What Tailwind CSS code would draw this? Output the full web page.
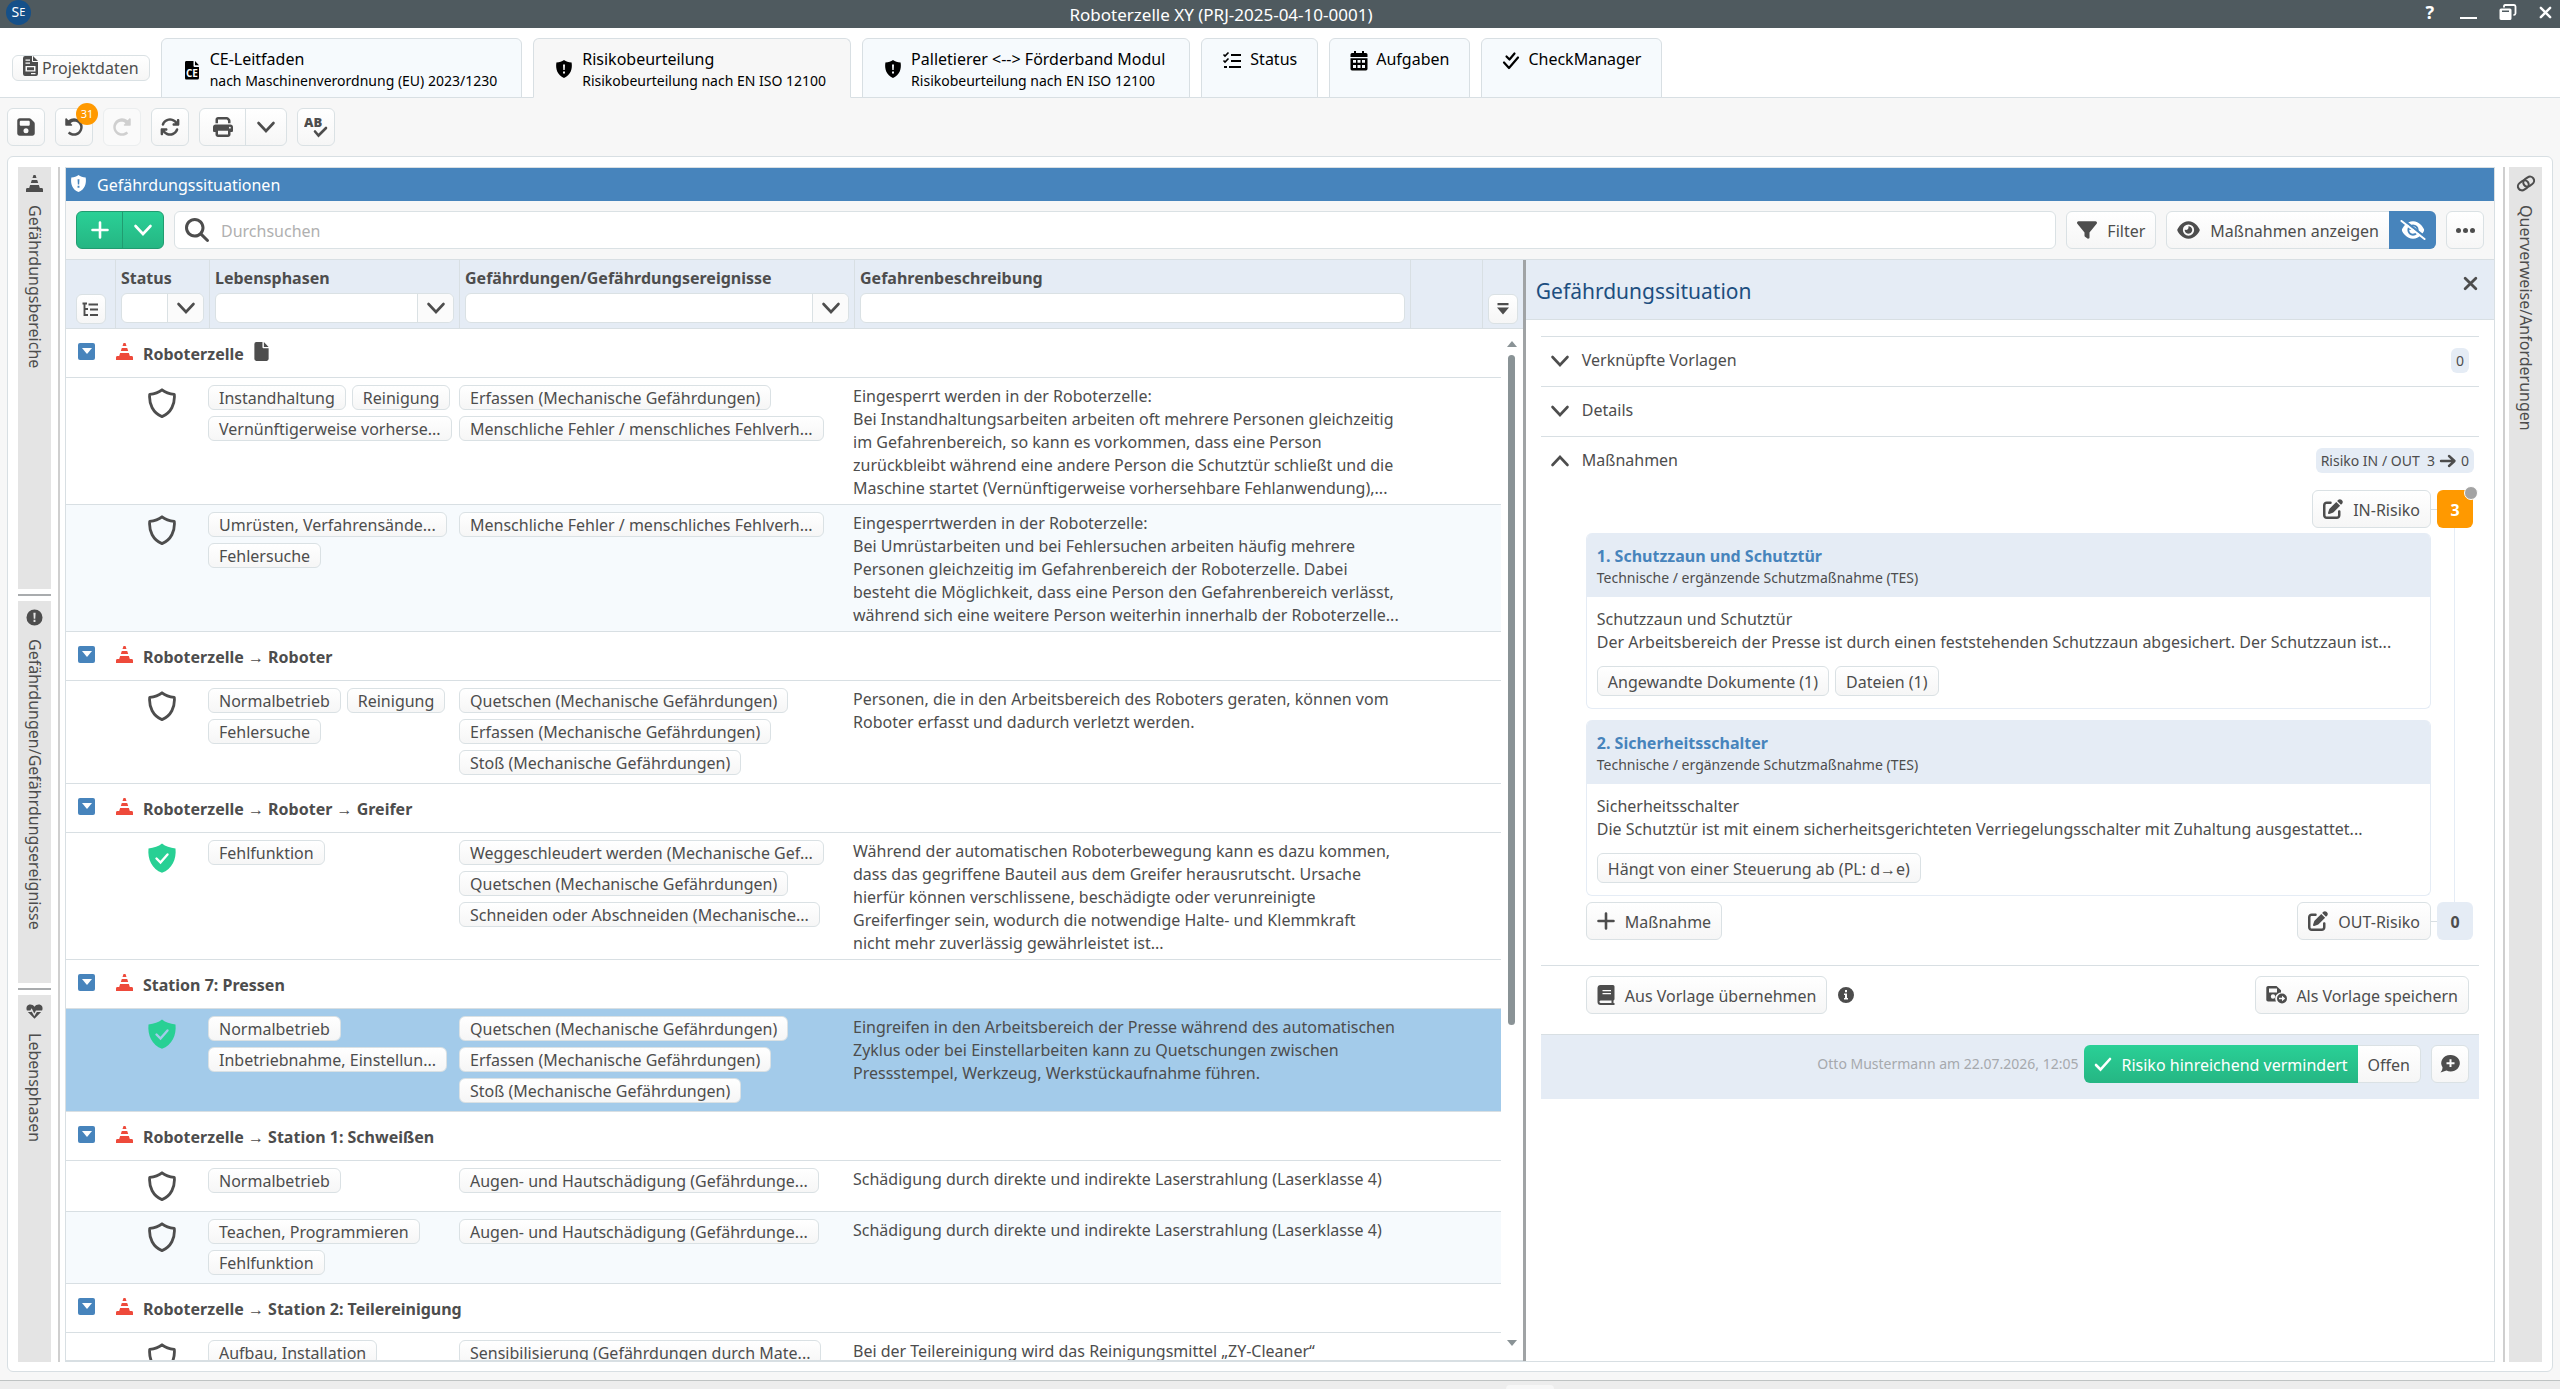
<!DOCTYPE html>
<html lang="de">
<head>
    <meta charset="UTF-8">
    <meta name="viewport" content="width=device-width, initial-scale=1.0">
    <title>Roboterzelle XY (PRJ-2025-04-10-0001)</title>
    <script src="https://cdn.jsdelivr.net/npm/@tailwindcss/browser@4"></script>
</head>
<body class="h-screen flex flex-col overflow-hidden bg-[#f7f7f7] font-['Noto_Sans','Open_Sans',sans-serif] text-base leading-[23px] text-[#4d4d4d]">

    <!-- Icons -->
    <svg class="hidden">
        <symbol id="i-save" viewBox="0 0 448 512"><path fill="currentColor" d="M64 32C28.7 32 0 60.7 0 96V416c0 35.3 28.7 64 64 64H384c35.3 0 64-28.7 64-64V173.3c0-17-6.7-33.3-18.7-45.3L352 50.7C340 38.7 323.7 32 306.7 32H64zm0 96c0-17.7 14.3-32 32-32H288c17.7 0 32 14.3 32 32v64c0 17.7-14.3 32-32 32H96c-17.7 0-32-14.3-32-32V128zM224 288a64 64 0 1 1 0 128 64 64 0 1 1 0-128z"/></symbol>
        <symbol id="i-undo" viewBox="0 0 512 512"><path fill="currentColor" d="M48 32L32 48v160l16 16h150l16-20-44-44c60-50 140-44 199 0 62 62 62 150 0 212s-164 62-226 0l-46 42c88 88 230 88 317 0s87-229 0-317-210-88-304-16L64 32z"/></symbol>
        <symbol id="i-rotate" viewBox="0 0 512 512"><path fill="currentColor" d="M105.1 202.6c7.7-21.8 20.2-42.3 37.8-59.8c62.5-62.5 163.8-62.5 226.3 0L386.3 160H352c-17.7 0-32 14.3-32 32s14.3 32 32 32H463.9c17.7 0 32-14.3 32-32V80c0-17.7-14.3-32-32-32s-32 14.3-32 32v35.2L414.4 97.6c-87.5-87.5-229.3-87.5-316.8 0C73.2 122 55.6 150.7 44.8 181.4c-5.9 16.7 2.9 34.9 19.5 40.8s34.9-2.9 40.8-19.5zM39 289.3c-5 1.5-9.8 4.2-13.7 8.2c-4 4-6.7 8.8-8.1 14c-.3 1.2-.6 2.5-.8 3.8c-.3 1.7-.4 3.4-.4 5.1V432c0 17.7 14.3 32 32 32s32-14.3 32-32V396.9l17.6 17.5c87.5 87.4 229.3 87.4 316.7 0c24.4-24.4 42.1-53.1 52.9-83.7c5.9-16.7-2.9-34.9-19.5-40.8s-34.9 2.9-40.8 19.5c-7.7 21.8-20.2 42.3-37.8 59.8c-62.5 62.5-163.8 62.5-226.3 0l-.1-.1L125.6 352H160c17.7 0 32-14.3 32-32s-14.3-32-32-32H48.4c-1.6 0-3.2 .1-4.8 .3s-3.1 .5-4.6 1z"/></symbol>
        <symbol id="i-print" viewBox="0 0 512 512"><path fill="currentColor" d="M128 0C92.7 0 64 28.7 64 64v96h64V64H354.7L384 93.3V160h64V93.3c0-17-6.7-33.3-18.7-45.3L400 18.7C388 6.7 371.7 0 354.7 0H128zM384 352v96H128V352H384zm64 32h32c17.7 0 32-14.3 32-32V256c0-35.3-28.7-64-64-64H64c-35.3 0-64 28.7-64 64v96c0 17.7 14.3 32 32 32H64v64c0 35.3 28.7 64 64 64H384c35.3 0 64-28.7 64-64V384zM432 248a24 24 0 1 1 0 48 24 24 0 1 1 0-48z"/></symbol>
        <symbol id="i-search" viewBox="0 0 512 512"><path fill="currentColor" d="M416 208c0 45.9-14.9 88.3-40 122.7L502.6 457.4c12.5 12.5 12.5 32.8 0 45.3s-32.8 12.5-45.3 0L330.7 376c-34.4 25.2-76.8 40-122.7 40C93.1 416 0 322.9 0 208S93.1 0 208 0S416 93.1 416 208zM208 352a144 144 0 1 0 0-288 144 144 0 1 0 0 288z"/></symbol>
        <symbol id="i-filter" viewBox="0 0 512 512"><path fill="currentColor" d="M3.9 54.9C10.5 40.9 24.5 32 40 32H472c15.5 0 29.5 8.9 36.1 22.9s4.6 30.5-5.2 42.5L320 320.9V448c0 12.1-6.8 23.2-17.7 28.6s-23.8 4.3-33.5-3l-64-48c-8.1-6-12.8-15.5-12.8-25.6V320.9L9 97.3C-.7 85.4-2.8 68.8 3.9 54.9z"/></symbol>
        <symbol id="i-eye" viewBox="0 0 576 512"><path fill="currentColor" d="M288 32c-80.8 0-145.5 36.8-192.6 80.6C48.6 156 17.3 208 2.5 243.7c-3.3 7.9-3.3 16.7 0 24.6C17.3 304 48.6 356 95.4 399.4C142.5 443.2 207.2 480 288 480s145.5-36.8 192.6-80.6c46.8-43.5 78.1-95.4 93-131.1c3.3-7.9 3.3-16.7 0-24.6c-14.9-35.7-46.2-87.7-93-131.1C433.5 68.8 368.8 32 288 32zM144 256a144 144 0 1 1 288 0 144 144 0 1 1 -288 0zm144-64c0 35.3-28.7 64-64 64c-7.1 0-13.9-1.2-20.3-3.3c-5.5-1.8-11.9 1.6-11.7 7.4c.3 6.9 1.3 13.8 3.2 20.7c13.7 51.2 66.4 81.6 117.6 67.9s81.6-66.4 67.9-117.6c-11.1-41.5-47.8-69.4-88.6-71.1c-5.8-.2-9.2 6.1-7.4 11.7c2.1 6.4 3.3 13.2 3.3 20.3z"/></symbol>
        <symbol id="i-eye-off" viewBox="0 0 640 512"><use href="#i-eye" x="32" y="0" width="576" height="512"/><path stroke="#4784bc" stroke-width="60" d="M50 -20L640 445"/><path stroke="currentColor" stroke-width="50" stroke-linecap="round" d="M25 25L615 487"/></symbol>
        <symbol id="i-edit" viewBox="0 0 512 512"><path fill="currentColor" d="M471.6 21.7c-21.9-21.9-57.3-21.9-79.2 0L362.3 51.7l97.9 97.9 30.1-30.1c21.9-21.9 21.9-57.3 0-79.2L471.6 21.7zm-299.2 220c-6.1 6.1-10.8 13.6-13.5 21.9l-29.6 88.8c-2.9 8.6-.6 18.1 5.8 24.6s15.9 8.7 24.6 5.8l88.8-29.6c8.2-2.7 15.7-7.4 21.9-13.5L437.7 172.3 339.7 74.3 172.4 241.7zM96 64C43 64 0 107 0 160V416c0 53 43 96 96 96H352c53 0 96-43 96-96V320c0-17.7-14.3-32-32-32s-32 14.3-32 32v96c0 17.7-14.3 32-32 32H96c-17.7 0-32-14.3-32-32V160c0-17.7 14.3-32 32-32h96c17.7 0 32-14.3 32-32s-14.3-32-32-32H96z"/></symbol>
        <symbol id="i-down" viewBox="0 0 20 20"><path fill="none" stroke="currentColor" stroke-width="2.6" stroke-linecap="round" d="M2.5 6L10 14L17.500 6"/></symbol>
        <symbol id="i-up" viewBox="0 0 20 20"><path fill="none" stroke="currentColor" stroke-width="2.6" stroke-linecap="round" d="M2.5 14L10 6L17.500 14"/></symbol>
        <symbol id="i-plus" viewBox="0 0 18 18"><path fill="none" stroke="currentColor" stroke-width="2.6" stroke-linecap="round" d="M9 1.500V16.500M1.500 9H16.500"/></symbol>
        <symbol id="i-close" viewBox="0 0 14 14"><path fill="none" stroke="currentColor" stroke-width="2.6" stroke-linecap="round" d="M2 2L12 12M12 2L2 12"/></symbol>
        <symbol id="i-check" viewBox="0 0 18 18"><path fill="none" stroke="currentColor" stroke-width="2.6" stroke-linecap="round" d="M2 10L6.500 14.500L16 4"/></symbol>
        <symbol id="i-shield" viewBox="0 0 30 30"><path fill="none" stroke="currentColor" stroke-width="2.8" stroke-linejoin="round" d="M15 1.800C18.500 4.500 22.500 5.800 27.300 6.400C28.200 16 24 25 15 28.600C6 25 1.800 16 2.700 6.400C7.500 5.800 11.500 4.500 15 1.800Z"/></symbol>
        <symbol id="i-shield-ok" viewBox="0 0 30 30"><path fill="currentColor" d="M15 0.500C18.500 3.300 23 5 28.500 5.400C29.600 16 25 26 15 29.800C5 26 .4 16 1.500 5.400C7 5 11.500 3.300 15 .5Z"/></symbol>
        <symbol id="i-shield-alert" viewBox="0 0 18 18"><path fill="currentColor" fill-rule="evenodd" d="M9 0C11 1.500 13.500 2.400 16.600 2.600C17.700 9 15.500 15.500 9 18C2.500 15.500 .3 9 1.400 2.600C4.500 2.400 7 1.500 9 0ZM8 4.500L8.300 10H9.700L10 4.500ZM8 11.500H10V13.500H8Z"/></symbol>
        <symbol id="i-cone" viewBox="0 0 17 17"><path fill="currentColor" d="M7.500 0H9.500L10.500 3H6.500ZM5.800 5H11.200L12.200 8H4.800ZM4.100 10H12.900L13.800 13H16Q17 13.200 17 14.500V17H0V14.500Q0 13.200 1 13H3.200Z"/></symbol>
        <symbol id="i-file" viewBox="0 0 15 20"><path fill="currentColor" d="M2 0H8.500V5.500Q8.700 6.500 9.500 6.500H15V18Q14.800 19.800 13 20H2Q.2 19.800 0 18V2Q.2 .2 2 0ZM10 0L15 5.300H10Z"/></symbol>
        <symbol id="i-project" viewBox="0 0 15 20"><path fill="currentColor" fill-rule="evenodd" d="M2 0H9V5Q9 6 10 6H15V18Q14.800 19.800 13 20H2Q.2 19.800 0 18V2Q.2 .2 2 0ZM10 0L15 5H10ZM2.500 3.500V4.800H7V3.500ZM2.500 6.500V7.800H7V6.500ZM2.500 10V15.500H12.500V10ZM4 11.200H11V14.300H4ZM8 17V18.200H12.500V17Z"/></symbol>
        <symbol id="i-ce" viewBox="0 0 16 20"><path fill="currentColor" d="M2 1H9.500V6Q9.700 7 10.500 7H15V18Q14.800 19.500 13.500 19.500H2Q1 19.500 1 18V2.500Q1 1 2 1ZM11 1L15 5.300H11Z"/><text x="2" y="16.500" font-family="Open Sans" font-size="10" font-weight="700" fill="#fff">CE</text></symbol>
        <symbol id="i-list" viewBox="0 0 20 20"><path fill="none" stroke="currentColor" stroke-width="2" d="M9 4H19M9 10H19M7 16H19M2 16H5"/><path fill="none" stroke="currentColor" stroke-width="1.600" d="M1.500 3.500L3 5L6.500 1.500M1.500 9.500L3 11L6.500 7.500"/></symbol>
        <symbol id="i-calendar" viewBox="0 0 18 20"><path fill="currentColor" fill-rule="evenodd" d="M4 0H6V2H12V0H14V2H16Q17.500 2.200 17.500 3.500V6H.5V3.500Q.6 2.200 2 2H4ZM.5 7.200H17.500V18Q17.400 19.400 16 19.500H2Q.6 19.400 .5 18ZM3 9V11.800H6V9ZM7.500 9V11.800H10.500V9ZM12 9V11.800H15V9ZM3 14V17H6V14ZM7.500 14V17H10.500V14ZM12 14V17H15V14Z"/></symbol>
        <symbol id="i-checks" viewBox="0 0 18 20"><path fill="none" stroke="currentColor" stroke-width="2.2" stroke-linecap="round" stroke-linejoin="round" d="M4.500 5.500L7.500 8.500L12.500 2.500M2 11.500L7 17L16 6.500"/></symbol>
        <symbol id="i-tree" viewBox="0 0 17 15"><path fill="none" stroke="currentColor" stroke-width="1.900" d="M.5 1.500H5M2.500 1.500V13H6M2.500 7H6M6.500 2.500H16M8 7.500H16M8 13H16"/></symbol>
        <symbol id="i-drop" viewBox="0 0 12 12"><path fill="currentColor" d="M.5 0H11.500V2.300H.5ZM0 4.500H12L6 11.500Z"/></symbol>
        <symbol id="i-alert" viewBox="0 0 18 18"><path fill="currentColor" fill-rule="evenodd" d="M9 .5A8.500 8.500 0 1 0 9 17.500A8.500 8.500 0 1 0 9 .5ZM7.800 4H10.200L9.800 10.200H8.200ZM8 11.500H10V13.700H8Z"/></symbol>
        <symbol id="i-info" viewBox="0 0 18 18"><path fill="currentColor" fill-rule="evenodd" d="M9 1A8 8 0 1 0 9 17A8 8 0 1 0 9 1ZM8 4H10V6.200H8ZM7 7.500H10V12H11V13.500H7V12H8V9H7Z"/></symbol>
        <symbol id="i-heart" viewBox="0 0 18 16"><path fill="currentColor" d="M9 3C7-.3 2.500-.3 1 2.500C.3 4 .3 5.500 1 7H4.500L6 4.500L8.800 10L10.500 7H17C17.700 5.500 17.700 4 17 2.500C15.500-.3 11-.3 9 3ZM2 8.500L9 15.700L16 8.500H11.500L8.800 13L6 8L5.500 8.500Z"/></symbol>
        <symbol id="i-link" viewBox="0 0 20 18"><g fill="none" stroke="currentColor" stroke-width="2.2" transform="rotate(-35 10 9)"><rect x="0.500" y="4.700" width="12" height="8.600" rx="4.300"/><rect x="7.500" y="4.700" width="12" height="8.600" rx="4.300"/></g></symbol>
        <symbol id="i-book" viewBox="0 0 18 20"><path fill="currentColor" fill-rule="evenodd" d="M3.500 0H16Q17.500 .2 17.500 1.500V14Q17.400 15 16.500 15.500V18H17.500V20H3.500Q.6 19.800 .5 17V3Q.7 .2 3.500 0ZM5.500 5V6.300H14V5ZM5.500 8V9.300H14V8ZM3.500 15.500Q2.400 15.700 2.400 16.800T3.500 18H14.500V15.500Z"/></symbol>
        <symbol id="i-save-as" viewBox="0 0 22 20"><path fill="currentColor" fill-rule="evenodd" d="M2 1H10.500L15 5.200V7.500A6 6 0 0 0 10 16.500H2Q.4 16.400 .3 15V2.600Q.5 1.200 2 1ZM3 3.500V7.500H11V3.500ZM7 9.300A2.200 2.200 0 1 0 7 13.700A2.200 2.200 0 1 0 7 9.300ZM16 8.500A5 5 0 1 0 16 18.500A5 5 0 1 0 16 8.500ZM13 12.800H16V10.700L19.200 13.500L16 16.300V14.200H13Z"/></symbol>
        <symbol id="i-comment" viewBox="0 0 22 20"><path fill="currentColor" fill-rule="evenodd" d="M11.500 1A9 8.200 0 1 1 7.500 16.400L1.500 18.500Q3.500 16.500 3.600 13.500A9 8.200 0 0 1 11.500 1ZM10.500 5.300V8.200H7.500V10.200H10.500V13.100H12.500V10.200H15.500V8.200H12.500V5.300Z"/></symbol>
        <symbol id="i-arrow" viewBox="0 0 18 16"><path fill="none" stroke="currentColor" stroke-width="2.4" stroke-linecap="round" stroke-linejoin="round" d="M2 8H15M10 3L15.500 8L10 13"/></symbol>
        <symbol id="i-spell" viewBox="0 0 24 22"><text x="0" y="11" font-family="Open Sans" font-size="13" font-weight="800" fill="currentColor">AB</text><path fill="none" stroke="currentColor" stroke-width="2.600" stroke-linecap="round" d="M11 15.500L14.500 19.500L22 12"/></symbol>
    </svg>

    <!-- Titelleiste -->
    <header class="relative h-7 shrink-0 flex items-center justify-between bg-[#4f5a5f] text-white">
        <span class="ml-1.5 -mt-1 size-[25px] rounded-full bg-[#155089] flex items-center justify-center text-sm">S<span class="text-[11px]">E</span></span>
        <h1 class="absolute inset-x-0 pr-[118px] text-center text-[17px]">Roboterzelle XY (PRJ-2025-04-10-0001)</h1>
        <div class="relative flex items-center gap-[22px] mr-2 -mt-1 text-lg font-bold">
            <button aria-label="Hilfe" class="mr-1">?</button>
            <button aria-label="Minimieren" class="w-[17px] h-0.5 mt-3 bg-white"></button>
            <button aria-label="Wiederherstellen"><svg class="w-[18px] h-4" viewBox="0 0 18 16"><path fill="#fff" fill-rule="evenodd" d="M2 4.500H11Q12.500 4.600 12.500 6V14.500Q12.400 16 11 16H2Q.5 15.900 .5 14.500V6Q.6 4.600 2 4.500ZM3 6.500V8H10V6.500Z"/><path fill="none" stroke="#fff" stroke-width="1.800" d="M5 3.500V2Q5.200 1 6 1H15Q16.500 1.200 16.500 2.500V9.500Q16.300 11 14.500 11"/></svg></button>
            <button aria-label="Schließen"><svg class="size-[13px]"><use href="#i-close"/></svg></button>
        </div>
    </header>

    <!-- Reiter -->
    <nav class="h-[70px] shrink-0 flex items-end gap-[11px] pl-3 bg-white border-b border-[#d8dfe3] text-black">
        <button class="h-[26px] mb-4 px-2.5 flex items-center gap-1 rounded-md border border-[#dae1e4] bg-linear-to-b from-white to-[#f6f6f6] text-[#4d4d4d]"><svg class="w-[15px] h-5 -mt-1"><use href="#i-project"/></svg>Projektdaten</button>
        <a href="#" class="h-[60px] -mb-px pl-5 pr-6 pt-[9px] flex gap-2 rounded-t-md border border-[#d8dfe3] bg-[#f6fafd]">
            <svg class="w-5 h-5 mt-3"><use href="#i-ce"/></svg>
            <span>CE-Leitfaden<span class="block text-sm leading-[19px]">nach Maschinenverordnung (EU) 2023/1230</span></span>
        </a>
        <a href="#" class="h-[60px] -mb-px pl-5 pr-6 pt-[9px] flex gap-2 rounded-t-md border border-[#d8dfe3] border-b-[#f7f7f7] bg-[#f7f7f7]">
            <svg class="w-5 h-[18px] mt-3"><use href="#i-shield-alert"/></svg>
            <span>Risikobeurteilung<span class="block text-sm leading-[19px]">Risikobeurteilung nach EN ISO 12100</span></span>
        </a>
        <a href="#" class="h-[60px] -mb-px pl-5 pr-6 pt-[9px] flex gap-2 rounded-t-md border border-[#d8dfe3] bg-[#f6fafd]">
            <svg class="w-5 h-[18px] mt-3"><use href="#i-shield-alert"/></svg>
            <span>Palletierer &lt;--&gt; Förderband Modul<span class="block text-sm leading-[19px]">Risikobeurteilung nach EN ISO 12100</span></span>
        </a>
        <a href="#" class="h-[60px] -mb-px px-5 pt-[9px] flex gap-2 rounded-t-md border border-[#d8dfe3] bg-[#f6fafd]"><svg class="size-5 mt-[3px]"><use href="#i-list"/></svg>Status</a>
        <a href="#" class="h-[60px] -mb-px px-5 pt-[9px] flex gap-2 rounded-t-md border border-[#d8dfe3] bg-[#f6fafd]"><svg class="w-[18px] h-5 mt-[3px]"><use href="#i-calendar"/></svg>Aufgaben</a>
        <a href="#" class="h-[60px] -mb-px px-5 pt-[9px] flex gap-2 rounded-t-md border border-[#d8dfe3] bg-[#f6fafd]"><svg class="w-[18px] h-5 mt-[3px]"><use href="#i-checks"/></svg>CheckManager</a>
    </nav>

    <!-- Werkzeugleiste -->
    <div class="shrink-0 flex gap-2.5 px-[7px] py-2.5">
        <button aria-label="Speichern" class="size-[38px] flex items-center justify-center rounded-md border border-[#dae1e4] bg-linear-to-b from-white to-[#f6f6f6]"><svg class="w-[18px] h-5"><use href="#i-save"/></svg></button>
        <button aria-label="Rückgängig" class="relative size-[38px] flex items-center justify-center rounded-md border border-[#dae1e4] bg-linear-to-b from-white to-[#f6f6f6]"><svg class="size-5"><use href="#i-undo"/></svg><span class="absolute -top-1.5 -right-1.5 size-[22px] rounded-full bg-[#ff9900] text-white text-[11px] leading-[22px]">31</span></button>
        <button aria-label="Wiederholen" disabled class="size-[38px] flex items-center justify-center rounded-md border border-[#ebeeef] bg-[#fafafa] text-[#cfcfcf]"><svg class="size-5 -scale-x-100"><use href="#i-undo"/></svg></button>
        <button aria-label="Aktualisieren" class="size-[38px] flex items-center justify-center rounded-md border border-[#dae1e4] bg-linear-to-b from-white to-[#f6f6f6]"><svg class="size-5"><use href="#i-rotate"/></svg></button>
        <div class="flex h-[38px] rounded-md border border-[#dae1e4] bg-linear-to-b from-white to-[#f6f6f6]">
            <button aria-label="Drucken" class="w-[46px] flex items-center justify-center border-r border-[#dae1e4]"><svg class="size-5"><use href="#i-print"/></svg></button>
            <button aria-label="Druckoptionen" class="w-10 flex items-center justify-center"><svg class="size-5"><use href="#i-down"/></svg></button>
        </div>
        <button aria-label="Rechtschreibung" class="size-[38px] flex items-center justify-center rounded-md border border-[#dae1e4] bg-linear-to-b from-white to-[#f6f6f6]"><svg class="w-6 h-[22px]"><use href="#i-spell"/></svg></button>
    </div>

    <main class="flex-1 min-h-0 mx-[7px] mb-2 p-2.5 pb-[9px] flex rounded-md border border-[#d8dfe3] bg-white">

        <!-- Seitenleiste links -->
        <aside class="w-[33px] shrink-0 flex flex-col gap-[5px]">
            <button class="h-[422px] pt-2 flex flex-col items-center gap-[13px] bg-[#e4e4e4]"><svg class="size-[17px]"><use href="#i-cone"/></svg><span class="[writing-mode:vertical-rl]">Gefährdungsbereiche</span></button>
            <hr class="border-0 h-0.5 bg-[#a9acae]">
            <button class="h-[382px] pt-2 flex flex-col items-center gap-[13px] bg-[#e4e4e4]"><svg class="size-[17px]"><use href="#i-alert"/></svg><span class="[writing-mode:vertical-rl]">Gefährdungen/Gefährdungsereignisse</span></button>
            <hr class="border-0 h-0.5 bg-[#a9acae]">
            <button class="flex-1 pt-2 flex flex-col items-center gap-[13px] bg-[#e4e4e4]"><svg class="size-[17px]"><use href="#i-heart"/></svg><span class="[writing-mode:vertical-rl]">Lebensphasen</span></button>
        </aside>
        <div class="w-0.5 shrink-0 ml-[7px] mr-[5px] bg-[#cfcfcf]"></div>

        <section class="flex-1 min-w-0 flex flex-col border border-[#d8dfe3]">
            <h2 class="h-[33px] shrink-0 flex items-center gap-2.5 pt-0.5 pl-1 bg-[#4784bc] text-white"><svg class="size-[17px] -mt-1"><use href="#i-shield-alert"/></svg>Gefährdungssituationen</h2>

            <div class="shrink-0 flex gap-2.5 px-2.5 py-2.5 bg-[#f7f7f7] border-b border-[#d8dfe3]">
                <div class="flex h-[38px] rounded-md border border-[#209c70] bg-linear-to-b from-[#2ad096] to-[#25b683] text-white">
                    <button aria-label="Hinzufügen" class="w-[46px] flex items-center justify-center border-r border-[#209c70]"><svg class="size-[18px]"><use href="#i-plus"/></svg></button>
                    <button aria-label="Weitere Optionen" class="w-10 flex items-center justify-center"><svg class="size-5"><use href="#i-down"/></svg></button>
                </div>
                <label class="flex-1 flex items-center gap-3 h-[38px] pl-2.5 rounded-md border border-[#dae1e4] bg-white">
                    <svg class="size-6"><use href="#i-search"/></svg>
                    <input type="search" aria-label="Durchsuchen" placeholder="Durchsuchen" class="flex-1 pt-0.5 outline-none placeholder:text-[#b0b0b0]">
                </label>
                <button class="h-[38px] px-2.5 flex items-center gap-2.5 rounded-md border border-[#dae1e4] bg-linear-to-b from-white to-[#f6f6f6]"><svg class="size-5"><use href="#i-filter"/></svg><span class="pt-0.5">Filter</span></button>
                <div class="flex h-[38px] rounded-md border border-[#dae1e4] bg-linear-to-b from-white to-[#f6f6f6]">
                    <button class="px-2.5 flex items-center gap-2.5"><svg class="w-[23px] h-5"><use href="#i-eye"/></svg><span class="pt-0.5">Maßnahmen anzeigen</span></button>
                    <button aria-label="Maßnahmen ausblenden" class="w-[47px] -my-px -mr-px flex items-center justify-center rounded-r-md bg-[#4784bc] text-white"><svg class="w-[26px] h-5"><use href="#i-eye-off"/></svg></button>
                </div>
                <button aria-label="Mehr" class="size-[38px] flex items-center justify-center gap-[2px] rounded-md border border-[#dae1e4] bg-linear-to-b from-white to-[#f6f6f6]"><i class="size-[5px] rounded-full bg-[#4d4d4d]"></i><i class="size-[5px] rounded-full bg-[#4d4d4d]"></i><i class="size-[5px] rounded-full bg-[#4d4d4d]"></i></button>
            </div>

            <div class="flex-1 min-h-0 flex">

                <!-- Tabelle -->
                <div class="w-[60%] min-w-0 flex flex-col border-b border-[#d8dfe3]">
                    <div class="h-[69px] shrink-0 flex bg-[#e5ecf5] border-b border-[#d8dfe3] font-bold">
                        <div class="w-[50px] flex items-end justify-center pb-1 border-r border-[#d8dfe3]"><button aria-label="Baumansicht" class="size-[30px] flex items-center justify-center rounded-md border border-[#dae1e4] bg-linear-to-b from-white to-[#f6f6f6]"><svg class="w-[17px] h-[15px]"><use href="#i-tree"/></svg></button></div>
                        <div class="w-[94px] px-[5px] pt-[7px] border-r border-[#d8dfe3]"><label for="f-status">Status</label>
                            <div class="relative mt-[3px]"><select id="f-status" class="block w-full h-[30px] appearance-none rounded-md border border-[#dae1e4] bg-white"></select><span class="pointer-events-none absolute inset-y-px right-px w-9 flex items-center justify-center rounded-r-md border-l border-[#dae1e4] bg-[#fbfbfb]"><svg class="size-5"><use href="#i-down"/></svg></span></div></div>
                        <div class="w-[250px] px-[5px] pt-[7px] border-r border-[#d8dfe3]"><label for="f-phase">Lebensphasen</label>
                            <div class="relative mt-[3px]"><select id="f-phase" class="block w-full h-[30px] appearance-none rounded-md border border-[#dae1e4] bg-white"></select><span class="pointer-events-none absolute inset-y-px right-px w-9 flex items-center justify-center rounded-r-md border-l border-[#dae1e4] bg-[#fbfbfb]"><svg class="size-5"><use href="#i-down"/></svg></span></div></div>
                        <div class="w-[395px] px-[5px] pt-[7px] border-r border-[#d8dfe3]"><label for="f-gef">Gefährdungen/Gefährdungsereignisse</label>
                            <div class="relative mt-[3px]"><select id="f-gef" class="block w-full h-[30px] appearance-none rounded-md border border-[#dae1e4] bg-white"></select><span class="pointer-events-none absolute inset-y-px right-px w-9 flex items-center justify-center rounded-r-md border-l border-[#dae1e4] bg-[#fbfbfb]"><svg class="size-5"><use href="#i-down"/></svg></span></div></div>
                        <div class="flex-1 px-[5px] pt-[7px] border-r border-[#d8dfe3]"><label for="f-text">Gefahrenbeschreibung</label>
                            <input id="f-text" type="text" class="block mt-[3px] w-full h-[30px] rounded-md border border-[#dae1e4] bg-white"></div>
                        <div class="w-[72px] border-r border-[#d8dfe3]"></div>
                        <div class="w-10 flex items-end justify-center pb-1"><button aria-label="Filtermenü" class="size-[30px] flex items-center justify-center rounded-md border border-[#dae1e4] bg-linear-to-b from-white to-[#f6f6f6]"><svg class="size-3"><use href="#i-drop"/></svg></button></div>
                    </div>
                    <div class="flex-1 min-h-0 flex">
                        <div class="flex-1 overflow-hidden">
                            <table class="w-full table-fixed border-separate border-spacing-0 text-left">
                                <colgroup><col class="w-[50px]"><col class="w-[92px]"><col class="w-[251px]"><col class="w-[394px]"><col></colgroup>
                                <tbody id="rows"></tbody>
                            </table>
                        </div>
                        <div class="w-[22px] shrink-0 flex flex-col items-center pt-3 pb-3.5 text-[#8a9396]">
                            <svg class="w-2.5 h-1.5" viewBox="0 0 10 6"><path fill="currentColor" d="M0 6L5 0L10 6Z"/></svg>
                            <div class="flex-1 w-full flex justify-center pt-2"><div class="w-[7px] h-[68%] rounded-full bg-[#8a9396]"></div></div>
                            <svg class="w-2.5 h-1.5" viewBox="0 0 10 6"><path fill="currentColor" d="M0 0L5 6L10 0Z"/></svg>
                        </div>
                    </div>
                </div>
                <div class="w-[3px] shrink-0 bg-[#a0a3a5]"></div>

                <!-- Detailbereich -->
                <div class="flex-1 min-w-0 bg-white">
                    <div class="h-[60px] flex items-center justify-between pt-1 pl-2.5 pr-4 bg-[#e5ecf5] border-b border-[#d8dfe3]">
                        <h3 class="text-[21px] text-[#1d4f80]">Gefährdungssituation</h3>
                        <button aria-label="Bereich schließen" class="mb-4"><svg class="size-[15px]"><use href="#i-close"/></svg></button>
                    </div>
                    <div class="mx-[15px] mt-4">
                        <div class="h-[50px] flex items-center gap-3 pb-0.5 pl-[9px] pr-2.5 border-t border-[#d8dfe3]"><svg class="size-5"><use href="#i-down"/></svg>Verknüpfte Vorlagen<span class="ml-auto w-[18px] rounded-md bg-[#e5ecf5] text-center text-sm leading-[25px]">0</span></div>
                        <div class="h-[50px] flex items-center gap-3 pb-0.5 pl-[9px] border-t border-[#d8dfe3]"><svg class="size-5"><use href="#i-down"/></svg>Details</div>
                        <div class="h-[50px] flex items-center gap-3 pb-0.5 pl-[9px] pr-[5px] border-t border-[#d8dfe3]"><svg class="size-5"><use href="#i-up"/></svg>Maßnahmen<span class="ml-auto px-[5px] flex items-center gap-1 rounded-md bg-[#e5ecf5] text-sm leading-[25px]">Risiko IN / OUT&nbsp; 3<svg class="w-[18px] h-4"><use href="#i-arrow"/></svg>0</span></div>

                        <div class="flex items-center justify-end pt-1 pr-1.5">
                            <button class="h-[38px] px-2.5 flex items-center gap-2.5 rounded-md border border-[#dae1e4] bg-linear-to-b from-white to-[#f6f6f6]"><svg class="size-5"><use href="#i-edit"/></svg><span class="pt-0.5">IN-Risiko</span></button>
                            <span class="w-1.5 h-px bg-[#d8dfe3]"></span>
                            <span class="relative h-[38px] w-9 rounded-md bg-[#ff9900] text-center font-bold leading-10 text-white">3<i class="absolute -top-1 -right-[5px] size-3.5 rounded-full border border-white bg-[#a3a3a3]"></i></span>
                        </div>
                        <div class="flex pl-[45px]">
                            <div class="flex-1 min-w-0 pt-[5px] pb-1.5 flex flex-col gap-[11px]">
                                <article class="rounded-md border border-[#e5ecf5] border-t-0 overflow-hidden">
                                    <div class="px-2.5 pt-3 pb-2.5 bg-[#e5ecf5]"><h4 class="font-bold text-[#4784bc]">1. Schutzzaun und Schutztür</h4><p class="text-sm leading-[19px]">Technische / ergänzende Schutzmaßnahme (TES)</p></div>
                                    <div class="px-2.5 pt-[11px] pb-3">
                                        <p class="whitespace-nowrap">Schutzzaun und Schutztür<br>Der Arbeitsbereich der Presse ist durch einen feststehenden Schutzzaun abgesichert. Der Schutzzaun ist...</p>
                                        <div class="flex gap-1.5 mt-3"><button class="h-[30px] pt-0.5 px-2.5 rounded-md border border-[#dae1e4] bg-linear-to-b from-white to-[#f6f6f6]">Angewandte Dokumente (1)</button><button class="h-[30px] pt-0.5 px-2.5 rounded-md border border-[#dae1e4] bg-linear-to-b from-white to-[#f6f6f6]">Dateien (1)</button></div>
                                    </div>
                                </article>
                                <article class="rounded-md border border-[#e5ecf5] border-t-0 overflow-hidden">
                                    <div class="px-2.5 pt-3 pb-2.5 bg-[#e5ecf5]"><h4 class="font-bold text-[#4784bc]">2. Sicherheitsschalter</h4><p class="text-sm leading-[19px]">Technische / ergänzende Schutzmaßnahme (TES)</p></div>
                                    <div class="px-2.5 pt-[11px] pb-3">
                                        <p class="whitespace-nowrap">Sicherheitsschalter<br>Die Schutztür ist mit einem sicherheitsgerichteten Verriegelungsschalter mit Zuhaltung ausgestattet...</p>
                                        <button class="h-[30px] mt-3 pt-0.5 px-2.5 block rounded-md border border-[#dae1e4] bg-linear-to-b from-white to-[#f6f6f6]">Hängt von einer Steuerung ab (PL: d→e)</button>
                                    </div>
                                </article>
                            </div>
                            <div class="w-6 border-r border-[#e5ecf5]"></div><div class="w-6"></div>
                        </div>
                        <div class="flex items-center pl-[45px] pr-1.5 pb-[25px]">
                            <button class="h-[38px] px-2.5 mr-auto flex items-center gap-2.5 rounded-md border border-[#dae1e4] bg-linear-to-b from-white to-[#f6f6f6]"><svg class="size-[18px]"><use href="#i-plus"/></svg><span class="pt-0.5">Maßnahme</span></button>
                            <button class="h-[38px] px-2.5 flex items-center gap-2.5 rounded-md border border-[#dae1e4] bg-linear-to-b from-white to-[#f6f6f6]"><svg class="size-5"><use href="#i-edit"/></svg><span class="pt-0.5">OUT-Risiko</span></button>
                            <span class="w-1.5 h-px bg-[#d8dfe3]"></span>
                            <span class="h-[38px] w-9 rounded-md bg-[#e5ecf5] text-center font-bold leading-10">0</span>
                        </div>
                        <div class="flex items-center pt-2.5 pb-5 pl-[45px] pr-2.5 border-y border-[#d8dfe3]">
                            <button class="h-[38px] px-2.5 flex items-center gap-2.5 rounded-md border border-[#dae1e4] bg-linear-to-b from-white to-[#f6f6f6]"><svg class="w-[18px] h-5"><use href="#i-book"/></svg><span class="pt-0.5">Aus Vorlage übernehmen</span></button>
                            <svg class="size-[18px] ml-2.5"><use href="#i-info"/></svg>
                            <button class="h-[38px] px-2.5 ml-auto flex items-center gap-2 rounded-md border border-[#dae1e4] bg-linear-to-b from-white to-[#f6f6f6]"><svg class="w-[22px] h-5"><use href="#i-save-as"/></svg><span class="pt-0.5">Als Vorlage speichern</span></button>
                        </div>
                        <div class="flex items-center justify-end pt-2.5 pb-4 pr-2.5 bg-[#e5ecf5]">
                            <span class="mr-[5px] text-sm text-[#a6a9ad]">Otto Mustermann am 22.07.2026, 12:05</span>
                            <button class="h-[38px] px-2.5 flex items-center gap-2.5 rounded-l-md bg-linear-to-b from-[#2ad096] to-[#25b683] text-white"><svg class="size-[18px]"><use href="#i-check"/></svg><span class="pt-0.5">Risiko hinreichend vermindert</span></button>
                            <button class="h-[38px] pt-0.5 px-2.5 rounded-r-md border border-l-0 border-[#dae1e4] bg-linear-to-b from-white to-[#f6f6f6]">Offen</button>
                            <button aria-label="Kommentar hinzufügen" class="size-[38px] ml-2.5 flex items-center justify-center rounded-md border border-[#dae1e4] bg-linear-to-b from-white to-[#f6f6f6]"><svg class="w-[22px] h-5"><use href="#i-comment"/></svg></button>
                        </div>
                    </div>
                </div>
            </div>
        </section>

        <!-- Seitenleiste rechts -->
        <div class="w-0.5 shrink-0 ml-2 mr-1 bg-[#cfcfcf]"></div>
        <aside class="w-[33px] shrink-0 flex flex-col">
            <button class="flex-1 pt-2 flex flex-col items-center gap-[13px] bg-[#e4e4e4]"><svg class="w-5 h-[17px]"><use href="#i-link"/></svg><span class="[writing-mode:vertical-rl]">Querverweise/Anforderungen</span></button>
        </aside>
    </main>
    <footer class="h-[9px] shrink-0 flex items-end justify-center bg-[#ededed] border-t border-[#bfc3c3]"><span class="w-12 h-1 ml-[500px] rounded-t-sm bg-[#f7f7f7]"></span></footer>

    <script>
        // Gruppen mit ihren Gefährdungssituationen
        const gruppen = [
            { titel: "Roboterzelle", datei: true, zeilen: [
                { phasen: ["Instandhaltung", "Reinigung", "Vernünftigerweise vorherse..."],
                  gef: ["Erfassen (Mechanische Gefährdungen)", "Menschliche Fehler / menschliches Fehlverh..."],
                  text: "Eingesperrt werden in der Roboterzelle:<br>Bei Instandhaltungsarbeiten arbeiten oft mehrere Personen gleichzeitig<br>im Gefahrenbereich, so kann es vorkommen, dass eine Person<br>zurückbleibt während eine andere Person die Schutztür schließt und die<br>Maschine startet (Vernünftigerweise vorhersehbare Fehlanwendung),..." },
                { phasen: ["Umrüsten, Verfahrensände...", "Fehlersuche"],
                  gef: ["Menschliche Fehler / menschliches Fehlverh..."],
                  text: "Eingesperrtwerden in der Roboterzelle:<br>Bei Umrüstarbeiten und bei Fehlersuchen arbeiten häufig mehrere<br>Personen gleichzeitig im Gefahrenbereich der Roboterzelle. Dabei<br>besteht die Möglichkeit, dass eine Person den Gefahrenbereich verlässt,<br>während sich eine weitere Person weiterhin innerhalb der Roboterzelle..." }
            ]},
            { titel: "Roboterzelle → Roboter", zeilen: [
                { phasen: ["Normalbetrieb", "Reinigung", "Fehlersuche"],
                  gef: ["Quetschen (Mechanische Gefährdungen)", "Erfassen (Mechanische Gefährdungen)", "Stoß (Mechanische Gefährdungen)"],
                  text: "Personen, die in den Arbeitsbereich des Roboters geraten, können vom<br>Roboter erfasst und dadurch verletzt werden." }
            ]},
            { titel: "Roboterzelle → Roboter → Greifer", zeilen: [
                { ok: true, phasen: ["Fehlfunktion"],
                  gef: ["Weggeschleudert werden (Mechanische Gef...", "Quetschen (Mechanische Gefährdungen)", "Schneiden oder Abschneiden (Mechanische..."],
                  text: "Während der automatischen Roboterbewegung kann es dazu kommen,<br>dass das gegriffene Bauteil aus dem Greifer herausrutscht. Ursache<br>hierfür können verschlissene, beschädigte oder verunreinigte<br>Greiferfinger sein, wodurch die notwendige Halte- und Klemmkraft<br>nicht mehr zuverlässig gewährleistet ist..." }
            ]},
            { titel: "Station 7: Pressen", zeilen: [
                { ok: true, aktiv: true, phasen: ["Normalbetrieb", "Inbetriebnahme, Einstellun..."],
                  gef: ["Quetschen (Mechanische Gefährdungen)", "Erfassen (Mechanische Gefährdungen)", "Stoß (Mechanische Gefährdungen)"],
                  text: "Eingreifen in den Arbeitsbereich der Presse während des automatischen<br>Zyklus oder bei Einstellarbeiten kann zu Quetschungen zwischen<br>Pressstempel, Werkzeug, Werkstückaufnahme führen." }
            ]},
            { titel: "Roboterzelle → Station 1: Schweißen", zeilen: [
                { phasen: ["Normalbetrieb"], gef: ["Augen- und Hautschädigung (Gefährdunge..."],
                  text: "Schädigung durch direkte und indirekte Laserstrahlung (Laserklasse 4)" },
                { phasen: ["Teachen, Programmieren", "Fehlfunktion"], gef: ["Augen- und Hautschädigung (Gefährdunge..."],
                  text: "Schädigung durch direkte und indirekte Laserstrahlung (Laserklasse 4)" }
            ]},
            { titel: "Roboterzelle → Station 2: Teilereinigung", zeilen: [
                { phasen: ["Aufbau, Installation"], gef: ["Sensibilisierung (Gefährdungen durch Mate..."],
                  text: "Bei der Teilereinigung wird das Reinigungsmittel „ZY-Cleaner“" }
            ]}
        ];

        function chips(liste) {
            return `<div class="flex flex-wrap gap-1.5">` + liste.map(t =>
                `<span class="h-[25px] px-2.5 rounded-md border border-[#dae1e4] bg-linear-to-b from-white to-[#f6f6f6] leading-[25px] whitespace-nowrap">${t}</span>`).join("") + `</div>`;
        }

        function gruppenZeile(g) {
            return `<tr><th colspan="5" class="h-[49px] px-3 border-b border-[#d8dfe3]"><div class="flex items-center">
                <button aria-label="Einklappen" class="size-[17px] -mt-1 rounded-xs bg-[#4784bc] text-white flex items-center justify-center"><svg class="w-2.5 h-1.5" viewBox="0 0 10 6"><path fill="currentColor" d="M0 0L5 6L10 0Z"/></svg></button>
                <svg class="size-[17px] ml-[21px] mr-2.5 -mt-1 text-[#ee4a3b]"><use href="#i-cone"/></svg>
                <span class="pt-0.5 font-bold">${g.titel}</span>
                ${g.datei ? `<svg class="w-[15px] h-[19px] ml-2.5 -mt-1"><use href="#i-file"/></svg>` : ""}
            </div></th></tr>`;
        }

        function datenZeile(z, i) {
            const farbe = z.aktiv ? "bg-[#a3cbea]" : i % 2 ? "bg-[#f6fafd]" : "";
            const haken = z.aktiv ? "#a3cbea" : "#fff";
            const schild = z.ok
                ? `<svg class="size-[30px] mx-auto text-[#28d094]" viewBox="0 0 30 30"><use href="#i-shield-ok"/><path fill="none" stroke="${haken}" stroke-width="2.4" stroke-linecap="round" d="M9.500 15.500L13.500 19.500L20.500 11.500"/></svg>`
                : `<svg class="size-[30px] mx-auto"><use href="#i-shield"/></svg>`;
            return `<tr class="align-top ${farbe}">
                <td class="border-b border-[#d8dfe3]"></td>
                <td class="py-2.5 border-b border-[#d8dfe3]">${schild}</td>
                <td class="pt-[7px] pb-2 border-b border-[#d8dfe3]">${chips(z.phasen)}</td>
                <td class="pt-[7px] pb-2 pr-2 border-b border-[#d8dfe3]">${chips(z.gef)}</td>
                <td class="pt-[7px] pb-1 border-b border-[#d8dfe3] whitespace-nowrap">${z.text}</td>
            </tr>`;
        }

        document.getElementById("rows").innerHTML = gruppen.map(g => gruppenZeile(g) + g.zeilen.map(datenZeile).join("")).join("");
    </script>
</body>
</html>
